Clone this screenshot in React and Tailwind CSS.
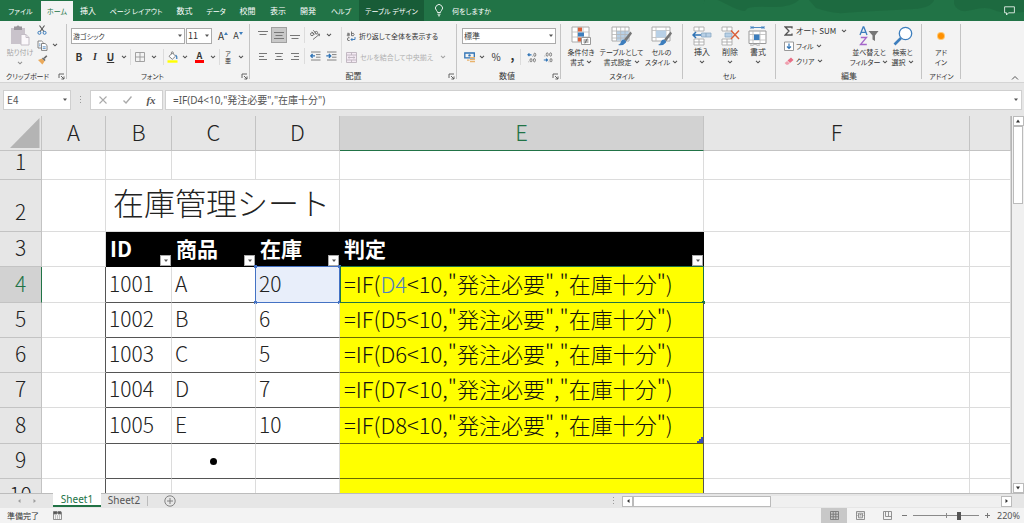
import React from "react";

const Chevron = ({ className = "" }) => (
  <svg viewBox="0 0 6 4" className={"h-1 w-[6px] shrink-0 " + className} fill="none" stroke="#555" strokeWidth="1.1">
    <path d="M1 .8 3 2.8 5 .8" />
  </svg>
);

const Caret = ({ className = "" }) => (
  <svg viewBox="0 0 6 4" className={"h-1 w-[6px] shrink-0 " + className} fill="#555">
    <path d="M1 .6h4L3 3z" />
  </svg>
);

const Launcher = () => (
  <svg viewBox="0 0 7 7" className="h-[7px] w-[7px]" fill="none" stroke="#555" strokeWidth=".9">
    <path d="M1 5V1h5M3 3l3 3M6 3.4V6H3.4" />
  </svg>
);

const Sep = () => <span className="h-4 w-px shrink-0 bg-[#dcdcdc]" />;

function Slot({ label, className, children }) {
  return (
    <button type="button" aria-label={label} className={"flex h-4 shrink-0 items-center justify-center " + className}>
      {children}
    </button>
  );
}

function Group({ title, className, launcher, small, children }) {
  return (
    <section className={"relative flex shrink-0 flex-col " + className}>
      <div className="h-[50px]">{children}</div>
      <div className="flex h-3 items-center justify-center">
        <span className={small ? "text-[7px]" : ""}>{title}</span>
      </div>
      {launcher && (
        <button type="button" aria-label={title + "の設定"} className="absolute right-[2px] bottom-[2px]">
          <Launcher />
        </button>
      )}
      <span className="absolute top-[3px] right-0 bottom-[3px] w-px bg-[#c4c4c4]" />
    </section>
  );
}

function BigButton({ icon, lines, chevron, small, className = "" }) {
  return (
    <button type="button" className={"flex shrink-0 flex-col items-center pt-[4px] " + (small ? "text-[7px] " : "") + className}>
      <span className="flex h-[22px] items-center justify-center">{icon}</span>
      <span className="flex h-[10px] items-center whitespace-nowrap">{lines[0]}</span>
      <span className="flex h-[10px] items-center gap-[2px] whitespace-nowrap">
        {lines[1]}
        {chevron && <Chevron />}
      </span>
    </button>
  );
}

const Lines = ({ d }) => (
  <svg viewBox="0 0 12 12" className="h-3 w-3" fill="none" stroke="#777" strokeWidth="1">
    <path d={d} />
  </svg>
);

const GrowIcon = ({ down }) => (
  <svg viewBox="0 0 4 3" className="mb-[6px] h-[3px] w-1" fill="#3d7ebd">
    <path d={down ? "M0 0h4L2 3z" : "M2 0l2 3H0z"} />
  </svg>
);
const PasteIcon = () => (
  <svg viewBox="0 0 20 21" className="h-[21px] w-5" fill="none">
    <path d="M1 3h14v16H1z" fill="#c9c3cb" />
    <path d="M4 1.5h2.5a1.7 1.7 0 0 1 3 0H12V5H4z" fill="#9a969c" />
    <path d="M11 9.5h5l3 3V20h-8z" fill="#fbf8fb" stroke="#c3bdc5" />
    <path d="M16 9.5v3h3" stroke="#c3bdc5" />
  </svg>
);
const CutIcon = () => (
  <svg viewBox="0 0 10 10" className="h-[10px] w-[10px]" fill="none">
    <path d="M2.5 .5 7 6.8M7.5 .5 3 6.8" stroke="#555" strokeWidth="1.1" />
    <circle cx="2.4" cy="7.8" r="1.5" stroke="#3d7ebd" />
    <circle cx="7.6" cy="7.8" r="1.5" stroke="#3d7ebd" />
  </svg>
);
const CopyIcon = () => (
  <svg viewBox="0 0 11 11" className="h-[11px] w-[11px]" fill="#fff" stroke="#777" strokeWidth=".9">
    <path d="M1 1h3.6l1.9 1.9V8H1z" />
    <path d="M4.5 3.5h3.6L10 5.4v5H4.5z" />
    <path d="M5.7 6.8h3M5.7 8.4h3M2 4h1.5M2 5.8h1.5" stroke="#3d7ebd" strokeWidth=".8" />
  </svg>
);
const BrushIcon = () => (
  <svg viewBox="0 0 11 10" className="h-[10px] w-[11px]">
    <path d="M1 5 5 3.6 7.6 6.2 5.4 9.5z" fill="#eaa95a" />
    <path d="m5 3.4 1-1 2.6 2.6-1 1z" fill="#666" />
    <path d="m7.2 3.4 2.6-2.6" stroke="#666" strokeWidth="1.6" />
  </svg>
);
const BorderIcon = () => (
  <svg viewBox="0 0 10 10" className="h-[10px] w-[10px]" fill="none" stroke="#999" strokeWidth=".9">
    <path d="M.5 .5h9v9h-9zM5 .5v9M.5 5h9" />
  </svg>
);
const FillIcon = () => (
  <svg viewBox="0 0 11 12" className="h-3 w-[11px]" fill="none">
    <path d="M.5 9.3h10v2.4H.5z" fill="#ff0" />
    <path d="m2 5.3 3.4-3.4 3.2 3.2-3.3 3.2z" fill="#fff" stroke="#777" strokeWidth=".9" />
    <path d="M4.4 3.4V1.2q1-1 1.8 0v2" stroke="#777" strokeWidth=".8" />
    <path d="M8.6 4q1.6 1 1.2 4" stroke="#3d7ebd" strokeWidth="1.3" />
  </svg>
);
const AngleIcon = () => (
  <svg viewBox="0 0 12 12" className="h-3 w-3" fill="none" stroke="#666" strokeWidth=".9">
    <circle cx="3" cy="5.2" r="1.5" />
    <path d="m3 2.8 2.4 2.8" />
    <path d="m4.2 1.2 3 3.4" />
    <circle cx="7.3" cy="3.7" r="1.3" />
    <path d="m4 10.5 6.4-5.2M8.6 5.2l2 0-.4 2" />
  </svg>
);
const IndentIcon = ({ flip }) => (
  <svg viewBox="0 0 11 10" className="h-[10px] w-[11px]" fill="none">
    <path d="M1 1h9.500M6 3.600h4.500M6 6.200h4.500M1 9h9.500" stroke="#777" strokeWidth=".9" />
    <path d={flip ? "M.3 4.900h4M2.900 3l1.800 1.900-1.800 1.900" : "M5 4.900H1M2.600 3 .8 4.900l1.800 1.900"} stroke="#2f73b5" strokeWidth="1.400" />
  </svg>
);
const WrapIcon = () => (
  <svg viewBox="0 0 10 11" className="h-[11px] w-[10px]" fill="none" stroke="#666" strokeWidth=".9">
    <path d="M1.200 2.300h2v2.500H1.500q-.9-.8 0-1.400h1.700M5.500 .5v4.300M5.500 2.500q2.600-.8 2.600 1t-2.600 1.200M3.600 6.800q-2-.8-2.200 1.200t2.200 1.500" />
    <path d="M9 6v2.500H5M6.400 7 5 8.500 6.400 10" stroke="#2f73b5" />
  </svg>
);
const MergeIcon = () => (
  <svg viewBox="0 0 11 11" className="h-[11px] w-[11px]" fill="#f4eaf4" stroke="#bdb3bd" strokeWidth=".9">
    <path d="M.5 .5h10v10H.5zM.5 3h10M.5 8h10M5.500 .5V3M5.500 8v2.500M2 5.500h7M3.500 4.300 2.200 5.500l1.300 1.200M7.500 4.300l1.300 1.200-1.300 1.200" />
  </svg>
);
const MoneyIcon = () => (
  <svg viewBox="0 0 12 11" className="h-[11px] w-3" fill="none">
    <path d="M.8 1h9.500v4.800H.8z" stroke="#2f73b5" strokeWidth="1.300" />
    <circle cx="5.500" cy="3.400" r="1.200" fill="#2f73b5" />
    <path d="M6 5h5v1.300H6zM6 7h5v1.300H6zM6 9h5v1.300H6zM3 7.500h2.500v1.200H3z" fill="#e9b36c" />
  </svg>
);
const DecimalIcon = ({ more }) => (
  <svg viewBox="0 0 10 11" className="h-[11px] w-[10px]" fill="none" stroke="#666" strokeWidth=".8">
    {more ? (
      <>
        <path d="M4.500 2.800H1M2.400 1.400 1 2.800l1.400 1.400" stroke="#2f73b5" strokeWidth="1.200" />
        <ellipse cx="7.800" cy="2.800" rx="1" ry="1.700" />
        <ellipse cx="4" cy="8.200" rx="1" ry="1.700" />
        <ellipse cx="7.400" cy="8.200" rx="1" ry="1.700" />
        <path d="M5.500 4.300h.6M1.500 9.800h.6" />
      </>
    ) : (
      <>
        <ellipse cx="4.200" cy="2.500" rx="1" ry="1.700" />
        <ellipse cx="7.600" cy="2.500" rx="1" ry="1.700" />
        <path d="M.8 8H4.500M3.100 6.600 4.500 8 3.100 9.400" stroke="#2f73b5" strokeWidth="1.200" />
        <ellipse cx="8" cy="8.200" rx="1" ry="1.700" />
        <path d="M5.700 9.800h.6M1.600 4h.6" />
      </>
    )}
  </svg>
);
const CondIcon = () => (
  <svg viewBox="0 0 21 20" className="h-5 w-[21px]" fill="none">
    <path d="M1 1h17v15H1z" fill="#fff" stroke="#aaa" />
    <path d="M6.500 1v15M12 1v15M1 6h17M1 11h17" stroke="#bbb" strokeWidth=".8" />
    <path d="M7 1.500h4v4H7zM7 11.500h3v4H7z" fill="#d9603b" />
    <path d="M7 6.500h6v4H7z" fill="#3d7ebd" />
    <path d="M10.500 11.500h9v7h-9z" fill="#fff" stroke="#999" />
    <path d="M12.500 14h5M12.500 16h5M16.300 12.500l-2.500 5" stroke="#555" strokeWidth=".8" />
  </svg>
);
const StyleBrush = () => (
  <>
    <path d="m19.500 5.500-6.500 8 2.300 1.800L21 7.500z" fill="#777" />
    <path d="M12.500 13.500q3 .5 2.500 3-2.500 3.500-8 2.500 3-1.500 3-3.500 1-2 2.500-2z" fill="#3d7ebd" />
  </>
);
const TableStyleIcon = () => (
  <svg viewBox="0 0 22 20" className="h-5 w-[22px]" fill="none">
    <path d="M1 1h17v14H1z" fill="#fff" stroke="#aaa" />
    <path d="M5.500 5h12v9.500h-12z" fill="#b8d0e6" />
    <path d="M5.500 1v14M9.700 1v14M14 1v14M1 5h17M1 8.500h17M1 12h17" stroke="#b5b5b5" strokeWidth=".8" />
    <StyleBrush />
  </svg>
);
const CellStyleIcon = () => (
  <svg viewBox="0 0 22 20" className="h-5 w-[22px]" fill="none">
    <path d="M1 1h18v14H1z" fill="#fff" stroke="#aaa" />
    <path d="M5 1v14M15 1v14M1 4.500h18M1 11.500h18" stroke="#bbb" strokeWidth=".8" />
    <path d="M5 4.500h10v7H5z" fill="#b8d0e6" />
    <StyleBrush />
  </svg>
);
const CellRows = () => (
  <path d="M2 1h10v4H2zM7 1v4M2 13h10v6H2zM7 13v6M2 16h10" fill="#fff" stroke="#aaa" strokeWidth=".9" />
);
const InsertIcon = () => (
  <svg viewBox="0 0 20 20" className="h-5 w-5" fill="none">
    <CellRows />
    <path d="M9.500 7h9.500v4H9.500z" fill="#b8d0e6" stroke="#8aa9c4" strokeWidth=".8" />
    <path d="M14 7v4" stroke="#8aa9c4" />
    <path d="M9 9H1M4 6 1 9l3 3" stroke="#2f73b5" strokeWidth="1.500" />
  </svg>
);
const DeleteIcon = () => (
  <svg viewBox="0 0 20 20" className="h-5 w-5" fill="none">
    <CellRows />
    <path d="M5 7h7v4H5z" fill="#b8d0e6" stroke="#8aa9c4" strokeWidth=".8" />
    <path d="m11 4.500 8 8.500M19 4.500 11 13" stroke="#d9603b" strokeWidth="1.500" />
  </svg>
);
const FormatIcon = () => (
  <svg viewBox="0 0 20 20" className="h-5 w-5" fill="none">
    <path d="M3 1.500h13M3 0v3M16 0v3M5.500 0 4 1.500 5.500 3M13.500 0 15 1.500 13.500 3" stroke="#3d7ebd" strokeWidth=".9" />
    <path d="M1 5h17v12.500H1z" fill="#fff" stroke="#999" />
    <path d="M5 5v12.500M12 5v12.500M1 8.500h17M1 14h17" stroke="#bbb" strokeWidth=".8" />
    <path d="M6 8.500h5.500V14H6z" fill="#3d7ebd" />
    <path d="M2 19q3 1 5-1 2 2 5 1" stroke="#999" strokeWidth=".8" />
  </svg>
);
const SortIcon = () => (
  <svg viewBox="0 0 20 20" className="h-5 w-5" fill="none">
    <path d="m1 9 3.200-8h.6L8 9M2.200 6.300h4.600" stroke="#3d7ebd" strokeWidth="1.300" />
    <path d="M1.800 11.500h5.700L1.500 18.500h6.300" stroke="#a566c9" strokeWidth="1.300" />
    <path d="M9.500 5h10L16 9.500V15l-2.500-1.500v-4z" fill="#777" />
  </svg>
);
const FindIcon = () => (
  <svg viewBox="0 0 20 20" className="h-5 w-5" fill="#fff">
    <path d="M8 12 1.500 18.500" stroke="#3d7ebd" strokeWidth="2.600" />
    <circle cx="12.500" cy="7.500" r="6.200" stroke="#3d7ebd" strokeWidth="1.300" />
  </svg>
);
const AddinIcon = () => (
  <svg viewBox="0 0 10 10" className="h-[10px] w-[10px]">
    <circle cx="5" cy="5" r="4" fill="#ffc56b" />
    <circle cx="5" cy="5" r="3" fill="#ff9000" />
  </svg>
);
const SumIcon = () => (
  <svg viewBox="0 0 9 10" className="h-[10px] w-[9px]" fill="none" stroke="#555" strokeWidth="1.300">
    <path d="M8 2.500V1H1.200L5 5 1.200 9H8V7.500" />
  </svg>
);
const FillDownIcon = () => (
  <svg viewBox="0 0 10 10" className="h-[10px] w-[10px]" fill="none">
    <path d="M.5 1h9v8.500h-9z" fill="#fff" stroke="#999" />
    <path d="M5 2.500v5M3 5.500l2 2 2-2" stroke="#2f73b5" strokeWidth="1.200" />
  </svg>
);
const EraserIcon = () => (
  <svg viewBox="0 0 10 8" className="h-2 w-[10px]">
    <path d="M3.500 3.500 7 .5 9.500 3 6 6z" fill="#e86f86" />
    <path d="M3.100 3.900 5.600 6.400 4 7.700H2.300L.6 6z" fill="#f0a0af" />
  </svg>
);

function Tab({ className, children }) {
  return (
    <button type="button" className={"flex shrink-0 items-center justify-center whitespace-nowrap " + className}>
      {children}
    </button>
  );
}

function TitleBar() {
  return (
    <nav className="relative flex h-[21px] shrink-0 items-stretch overflow-hidden bg-[#217346] text-white">
      <svg viewBox="0 0 330 21" className="absolute top-0 right-0 h-[21px] w-[330px]" fill="#1c663d">
        <path d="M10 0h95q-8 8-30 7T52 10 30 3 10 4zM115 0h125q-3 8-20 9t-38 2-32 2-28-5z" opacity=".7" />
        <path d="M260 0h70v12q-22 2-30-2t-22 0-18-6z" opacity=".7" />
      </svg>
      <Tab className="w-[41px] text-[7px]">ファイル</Tab>
      <Tab className="mt-px w-8 bg-[#f3f3f3] text-[7px] text-[#217346]">ホーム</Tab>
      <Tab className="w-[30px]">挿入</Tab>
      <Tab className="w-[66px] text-[7px]">ページ レイアウト</Tab>
      <Tab className="w-[31px]">数式</Tab>
      <Tab className="w-8 text-[7px]">データ</Tab>
      <Tab className="w-[31px]">校閲</Tab>
      <Tab className="w-[30px]">表示</Tab>
      <Tab className="w-[30px]">開発</Tab>
      <Tab className="w-9 text-[7px]">ヘルプ</Tab>
      <Tab className="w-[65px] bg-[#185c37] text-[7px]">テーブル デザイン</Tab>
      <Tab className="ml-[10px] gap-2 text-[7px]">
        <svg viewBox="0 0 10 13" className="h-[13px] w-[10px]" fill="none" stroke="#fff" strokeWidth=".9">
          <path d="M3.500 8.500q0-1-1-2a3.500 3.500 0 1 1 5 0q-1 1-1 2zM3.500 10.200h3M4 11.800h2" />
        </svg>
        何をしますか
      </Tab>
      <button type="button" aria-label="コメント" className="relative mr-[9px] ml-auto flex items-center">
        <svg viewBox="0 0 11 10" className="h-[10px] w-[11px]" fill="none" stroke="#e5efe9" strokeWidth=".9">
          <path d="M.6 .8h9.800v6H4.500L2.500 9V6.800H.6z" />
        </svg>
      </button>
    </nav>
  );
}

function Ribbon() {
  return (
    <div className="flex h-[62px] shrink-0 overflow-hidden border-b border-[#d4d4d4] bg-[#f3f3f3]">
      <Group title="クリップボード" className="w-[67px] pr-3" launcher small>
        <div className="flex pl-1">
          <div className="text-[#a5a5a5]">
            <button type="button" className="flex w-8 flex-col items-center pt-[4px]">
              <PasteIcon />
              <span className="flex h-[11px] items-center text-[7px] whitespace-nowrap">貼り付け</span>
              <Chevron className="mt-1 opacity-60" />
            </button>
          </div>
          <div className="flex flex-col gap-[5px] pt-1 pl-[1px]">
            <button type="button" aria-label="切り取り" className="h-[10px]"><CutIcon /></button>
            <button type="button" aria-label="コピー" className="flex h-[10px] items-center gap-1"><CopyIcon /><Chevron /></button>
            <button type="button" aria-label="書式のコピー" className="h-[10px]"><BrushIcon /></button>
          </div>
        </div>
      </Group>

      <Group title="フォント" className="w-[183px] pr-3" launcher small>
        <div className="flex items-center pt-[7px] pl-1">
          <label className="relative flex h-4 w-[114px] shrink-0 items-center border border-[#ababab] bg-white">
            <select aria-label="フォント名" className="h-full w-full appearance-none px-px text-[7px]">
              <option>游ゴシック</option>
            </select>
            <Caret className="pointer-events-none absolute right-px" />
          </label>
          <label className="relative ml-px flex h-4 w-[26px] shrink-0 items-center border border-[#ababab] bg-white">
            <select aria-label="フォント サイズ" className="h-full w-full appearance-none px-px text-[9px]">
              <option>11</option>
            </select>
            <Caret className="pointer-events-none absolute right-px" />
          </label>
          <Slot label="拡大" className="w-[18px] pl-1 text-[10px]">A<GrowIcon /></Slot>
          <Slot label="縮小" className="w-4 text-[9px]">A<GrowIcon down /></Slot>
        </div>
        <div className="flex items-center pt-[5px] pl-1">
          <Slot label="太字" className="w-4 text-[10px] font-bold">B</Slot>
          <Slot label="斜体" className="w-4 font-['Liberation_Serif',serif] text-[10px] font-bold italic">I</Slot>
          <Slot label="下線" className="w-[15px] text-[10px] font-bold underline">U</Slot>
          <Slot label="下線の種類" className="w-3"><Chevron /></Slot>
          <Sep />
          <Slot label="罫線" className="w-[18px]"><BorderIcon /></Slot>
          <Slot label="罫線の種類" className="w-[10px]"><Chevron /></Slot>
          <span className="w-1 shrink-0" />
          <Sep />
          <Slot label="塗りつぶし" className="w-[16px]"><FillIcon /></Slot>
          <Slot label="塗りつぶしの色" className="w-[10px]"><Chevron /></Slot>
          <Slot label="文字色" className="w-[19px]">
            <span className="border-b-[3px] border-[#f00] px-[2px] text-[9px] leading-[9px] font-bold">A</span>
          </Slot>
          <Slot label="文字色の選択" className="w-[8px]"><Chevron /></Slot>
          <span className="w-[2px] shrink-0" />
          <Sep />
          <Slot label="ふりがな" className="w-[16px] flex-col text-[6px] leading-[7px]"><span>ア</span><span>亜</span></Slot>
          <Slot label="ふりがなの設定" className="w-[10px]"><Chevron /></Slot>
        </div>
      </Group>

      <Group title="配置" className="w-[207px]" launcher>
        <div className="flex">
          <div className="w-[91px]">
            <div className="flex items-center pt-[6px] pl-[5px]">
              <Slot label="上揃え" className="w-4"><Lines d="M1 2.500h10M2.500 5.500h7" /></Slot>
              <Slot label="上下中央揃え" className="w-4 border border-[#a0a0a0] bg-[#c8c8c8]"><Lines d="M1 3.500h10M2.500 6.500h7M1 9.500h10" /></Slot>
              <Slot label="下揃え" className="w-4"><Lines d="M1 6.500h10M2.500 9.500h7" /></Slot>
              <span className="w-px" />
              <Sep />
              <Slot label="方向" className="w-5"><AngleIcon /></Slot>
              <Slot label="方向の設定" className="w-2"><Chevron /></Slot>
            </div>
            <div className="flex items-center pt-[5px] pl-[5px]">
              <Slot label="左揃え" className="w-4"><Lines d="M2 3.500h8M2 6.500h5M2 9.500h8" /></Slot>
              <Slot label="中央揃え" className="w-4"><Lines d="M2 3.500h8M3.500 6.500h5M2 9.500h8" /></Slot>
              <Slot label="右揃え" className="w-4"><Lines d="M2 3.500h8M5 6.500h5M2 9.500h8" /></Slot>
              <span className="w-px" />
              <Sep />
              <Slot label="インデントを減らす" className="w-5"><IndentIcon /></Slot>
              <Slot label="インデントを増やす" className="w-3"><IndentIcon flip /></Slot>
            </div>
          </div>
          <div className="mt-[6px] h-9 w-px bg-[#dcdcdc]" />
          <div className="text-[7px]">
            <button type="button" className="mt-[7px] flex h-4 items-center gap-[3px] pl-1 whitespace-nowrap"><WrapIcon />折り返して全体を表示する</button>
            <button type="button" className="mt-[5px] flex h-4 items-center gap-[3px] pl-1 whitespace-nowrap text-[#b0b0b0]"><MergeIcon />セルを結合して中央揃え<Chevron className="ml-1 opacity-50" /></button>
          </div>
        </div>
      </Group>

      <Group title="数値" className="w-[104px] pr-1" launcher>
        <div className="pt-[7px] pl-[5px]">
          <label className="relative flex h-4 w-[94px] items-center border border-[#ababab] bg-white">
            <select aria-label="表示形式" className="h-full w-full appearance-none px-px">
              <option>標準</option>
            </select>
            <Caret className="pointer-events-none absolute right-px" />
          </label>
        </div>
        <div className="flex items-center pt-[5px] pl-[5px]">
          <Slot label="通貨" className="w-[15px]"><MoneyIcon /></Slot>
          <Slot label="通貨の種類" className="w-[10px]"><Chevron /></Slot>
          <Slot label="パーセント" className="w-[18px] text-[10px]">%</Slot>
          <Slot label="桁区切り" className="w-[15px] pb-1 text-[12px] font-bold">,</Slot>
          <Sep />
          <Slot label="小数点以下の桁数を増やす" className="ml-[3px] w-4"><DecimalIcon more /></Slot>
          <Slot label="小数点以下の桁数を減らす" className="w-4"><DecimalIcon /></Slot>
        </div>
      </Group>

      <Group title="スタイル" className="w-[122px]" small>
        <div className="flex">
          <BigButton className="w-[40px]" icon={<CondIcon />} lines={["条件付き", "書式"]} chevron small />
          <BigButton className="w-[41px]" icon={<TableStyleIcon />} lines={["テーブルとして", "書式設定"]} chevron small />
          <BigButton className="w-[39px]" icon={<CellStyleIcon />} lines={["セルの", "スタイル"]} chevron small />
        </div>
      </Group>

      <Group title="セル" className="w-[93px]" small>
        <div className="flex pl-[5px]">
          <BigButton className="w-[28px]" icon={<InsertIcon />} lines={["挿入", ""]} chevron />
          <BigButton className="w-[28px]" icon={<DeleteIcon />} lines={["削除", ""]} chevron />
          <BigButton className="w-[28px]" icon={<FormatIcon />} lines={["書式", ""]} chevron />
        </div>
      </Group>

      <Group title="編集" className="w-[146px]">
        <div className="flex pl-2">
          <div className="flex w-[66px] flex-col gap-[5px] pt-[5px]">
            <button type="button" className="flex h-[10px] items-center gap-[3px] whitespace-nowrap"><SumIcon />オート SUM<Chevron className="ml-[2px]" /></button>
            <button type="button" className="flex h-[10px] items-center gap-[2px] text-[7px] whitespace-nowrap"><FillDownIcon />フィル<Chevron /></button>
            <button type="button" className="flex h-[10px] items-center gap-[2px] text-[7px] whitespace-nowrap"><EraserIcon />クリア<Chevron /></button>
          </div>
          <BigButton className="w-[38px]" icon={<SortIcon />} lines={["並べ替えと", "フィルター"]} chevron small />
          <BigButton className="w-[29px]" icon={<FindIcon />} lines={["検索と", "選択"]} chevron small />
        </div>
      </Group>

      <Group title="アドイン" className="w-[39px]" small>
        <BigButton className="w-[38px]" icon={<AddinIcon />} lines={["アド", "イン"]} small />
      </Group>
      <button type="button" aria-label="リボンを折りたたむ" className="mt-auto mr-[5px] mb-[2px] ml-auto">
        <svg viewBox="0 0 8 5" className="h-[5px] w-2" fill="none" stroke="#555">
          <path d="M1 4.500 4 1.500 7 4.500" />
        </svg>
      </button>
    </div>
  );
}

function FormulaBar() {
  return (
    <div className="flex h-[33px] shrink-0 items-center bg-[#e6e6e6] pl-[3px] text-[10px] text-[#555]">
      <label className="relative flex h-5 w-[68px] items-center border border-[#cfcfcf] bg-white">
        <input aria-label="名前ボックス" defaultValue="E4" className="w-full bg-transparent px-[3px] outline-none" />
        <Caret className="pointer-events-none absolute right-[2px]" />
      </label>
      <svg viewBox="0 0 3 8" className="mx-2 h-2 w-[3px]" fill="#999">
        <path d="M1 0h1v1H1zM1 3h1v1H1zM1 6h1v1H1z" />
      </svg>
      <div className="flex h-5 w-[73px] items-center border border-[#cfcfcf] bg-white">
        <Slot label="キャンセル" className="w-6">
          <svg viewBox="0 0 8 8" className="h-2 w-2" stroke="#aaa" strokeWidth="1.100"><path d="m.5 .5 7 7M7.500 .5l-7 7" /></svg>
        </Slot>
        <Slot label="入力" className="w-6">
          <svg viewBox="0 0 9 8" className="h-2 w-[9px]" fill="none" stroke="#aaa" strokeWidth="1.400"><path d="M.5 4.500 3 7l5.500-6.500" /></svg>
        </Slot>
        <Slot label="関数の挿入" className="w-6 font-['Liberation_Serif',serif] text-[11px] font-bold italic">fx</Slot>
      </div>
      <label className="relative mr-[2px] ml-[2px] flex h-5 flex-1 items-center border border-[#cfcfcf] bg-white">
        <input
          aria-label="数式バー"
          defaultValue={'=IF(D4<10,"発注必要","在庫十分")'}
          className="w-full bg-transparent px-[7px] font-['Noto_Sans','Noto_Sans_CJK_JP',sans-serif] outline-none"
        />
        <Caret className="pointer-events-none absolute right-[2px]" />
      </label>
    </div>
  );
}

const products = [
  { n: 4, id: "1001", name: "A", stock: "20", h: "h-9" },
  { n: 5, id: "1002", name: "B", stock: "6", h: "h-[35px]" },
  { n: 6, id: "1003", name: "C", stock: "5", h: "h-[35px]" },
  { n: 7, id: "1004", name: "D", stock: "7", h: "h-[35px]" },
  { n: 8, id: "1005", name: "E", stock: "10", h: "h-9" },
];

const line = "border-r border-b border-[#dcdcdc] ";
const corner = "border-r border-b border-[#c3c3c3] bg-[#e6e6e6] p-0 text-center font-light text-[#222] ";
const head = corner + "pb-1 ";
const activeHead = "border-r border-b bg-[#d2d2d2] p-0 pb-1 text-center font-light text-[#217346] ";
const body = "relative border-r border-b border-r-[#dcdcdc] border-b-[#555] p-0 pb-1 whitespace-nowrap ";
const yellow = "relative border-r border-b border-r-[#555] border-b-[#6b6b00] bg-[#ff0] p-0 pb-1 pl-1 text-[22px] whitespace-nowrap text-[#111] ";

function FilterHead({ children }) {
  return (
    <th className="relative border-b border-black bg-black p-0 pb-[3px] pl-[4px] text-left font-bold text-white">
      {children}
      <button type="button" aria-label={children + "のフィルター"} className="absolute right-px bottom-0 flex h-[11px] w-[11px] items-center justify-center border border-[#aaa] bg-white">
        <Caret />
      </button>
    </th>
  );
}

function Handles() {
  return (
    <>
      <span className="absolute -top-[2px] -left-[2px] h-[3px] w-[3px] bg-[#4472c4]" />
      <span className="absolute -top-[2px] -right-[2px] h-[3px] w-[3px] bg-[#4472c4]" />
      <span className="absolute -bottom-[2px] -left-[2px] h-[3px] w-[3px] bg-[#4472c4]" />
      <span className="absolute -right-[2px] -bottom-[2px] h-[3px] w-[3px] bg-[#4472c4]" />
    </>
  );
}

function Sheet() {
  return (
    <table className="w-full table-fixed border-separate border-spacing-0 font-['Noto_Sans_CJK_JP',sans-serif] text-[21px] leading-[28px] font-light text-[#222]">
      <colgroup>
        <col className="w-[42px]" />
        <col className="w-[64px]" />
        <col className="w-[66px]" />
        <col className="w-[84px]" />
        <col className="w-[84px]" />
        <col className="w-[364px]" />
        <col className="w-[266px]" />
        <col />
      </colgroup>
      <thead className="text-[22px]">
        <tr className="h-[35px]">
          <th className={corner} aria-label="すべて選択">
            <svg viewBox="0 0 41 34" className="ml-auto h-[34px] w-[41px]" fill="#b4b4b4"><path d="M39.500 2v30H10z" /></svg>
          </th>
          {["A", "B", "C", "D"].map((c) => <th key={c} scope="col" className={head}>{c}</th>)}
          <th scope="col" className={activeHead + "border-r-[#c3c3c3] border-b-[#217346]"}>E</th>
          <th scope="col" className={head}>F</th>
          <th scope="col" aria-label="G" className={head} />
        </tr>
      </thead>
      <tbody>
        <tr className="h-[29px]">
          <th scope="row" className={corner + "align-top leading-[20px]"}>1</th>
          {["A", "B", "C", "D", "E", "F", "G"].map((c) => <td key={c} className={line} />)}
        </tr>
        <tr className="h-[52px]">
          <th scope="row" className={corner + "pt-[10px]"}>2</th>
          <td className={line} />
          <td colSpan={3} className={line + "p-0 pb-2 pl-[7px] text-[31px] leading-[40px] whitespace-nowrap"}>在庫管理シート</td>
          <td className={line} /><td className={line} /><td className={line} />
        </tr>
        <tr className="h-[35px]">
          <th scope="row" className={head}>3</th>
          <td className={line} />
          <FilterHead>ID</FilterHead>
          <FilterHead>商品</FilterHead>
          <FilterHead>在庫</FilterHead>
          <FilterHead>判定</FilterHead>
          <td className={line} /><td className={line} />
        </tr>
        {products.map((p) => {
          const active = p.n === 4;
          return (
            <tr key={p.id} className={p.h}>
              <th scope="row" className={active ? activeHead + "border-r-[#217346] border-b-[#c3c3c3]" : head}>{p.n}</th>
              <td className="border-r border-b border-r-[#555] border-b-[#dcdcdc]" />
              <td className={body + "pl-[3px]"}>{p.id}</td>
              <td className={body + "pl-[3px]"}>{p.name}</td>
              <td className={active ? body + "bg-[#e8eefa] pl-[3px]" : body + "pl-[3px]"}>
                {p.stock}
                {active && <span className="absolute -top-px -right-px -bottom-px -left-px border border-[#4472c4]"><Handles /></span>}
              </td>
              <td className={yellow}>
                =IF({active ? <span className="text-[#4f81bd]">D4</span> : "D" + p.n}{'<10,"発注必要","在庫十分")'}
                {active && (
                  <span className="absolute -top-px -right-px -bottom-px left-0 border border-[#217346]">
                    <span className="absolute -right-[2px] -bottom-[2px] h-[3px] w-[3px] bg-[#217346]" />
                  </span>
                )}
                {p.n === 8 && (
                  <svg viewBox="0 0 6 6" className="absolute right-0 bottom-0 h-[6px] w-[6px]" fill="#3f51b5"><path d="M4 0h2v6H0V4h2V2h2z" /></svg>
                )}
              </td>
              <td className={line} /><td className={line} />
            </tr>
          );
        })}
        {[9, 10].map((n) => (
          <tr key={n} className="h-[35px]">
            <th scope="row" className={head}>{n}</th>
            <td className="border-r border-b border-r-[#555] border-b-[#dcdcdc]" />
            <td className={body} />
            <td className={body}>
              {n === 9 && <span className="mx-auto mt-1 block h-[7px] w-[7px] rounded-full bg-black" />}
            </td>
            <td className={body} />
            <td className={yellow} />
            <td className={line} /><td className={line} />
          </tr>
        ))}
      </tbody>
    </table>
  );
}

const Arrow = ({ d }) => (
  <svg viewBox="0 0 6 6" className="h-[6px] w-[6px]" fill="#333"><path d={d} /></svg>
);

function VerticalScroll() {
  return (
    <div className="flex w-[13px] shrink-0 flex-col items-center border-l border-[#b5b5b5] bg-[#f0f0f0]">
      <button type="button" aria-label="上へ" className="flex h-[10px] w-[11px] items-center justify-center border border-[#bbb] bg-white"><Arrow d="M3 1.500 5 4.500H1z" /></button>
      <span className="h-[78px] w-[10px] border border-[#bbb] bg-white" />
      <button type="button" aria-label="下へ" className="mt-auto flex h-[10px] w-[11px] items-center justify-center border border-[#bbb] bg-white"><Arrow d="M1 1.500h4L3 4.500z" /></button>
    </div>
  );
}

function SheetTabs() {
  return (
    <div className="flex h-[15px] shrink-0 items-stretch border-t border-[#bcbcbc] bg-[#e6e6e6] font-['Noto_Sans',sans-serif] text-[10px] leading-[12px] text-[#555]">
      <div className="flex w-[53px] items-center justify-center gap-[10px] opacity-40">
        <button type="button" aria-label="前のシート"><Arrow d="M4.500 1v4L2 3z" /></button>
        <button type="button" aria-label="次のシート"><Arrow d="M1.500 1v4L4 3z" /></button>
      </div>
      <button type="button" className="-mt-px mb-px w-12 border-b-2 border-[#217346] bg-white text-[#217346]">Sheet1</button>
      <button type="button" className="w-[46px] pb-[2px]">Sheet2</button>
      <span className="my-[2px] w-px bg-[#bbb]" />
      <button type="button" aria-label="新しいシート" className="ml-4 flex items-center">
        <svg viewBox="0 0 12 12" className="h-3 w-3" fill="none" stroke="#777" strokeWidth=".9"><circle cx="6" cy="6" r="5.200" /><path d="M6 3v6M3 6h6" /></svg>
      </button>
      <div className="ml-auto flex w-[412px] items-center">
        <svg viewBox="0 0 3 8" className="mr-[7px] h-2 w-[3px]" fill="#999"><path d="M1 0h1v1H1zM1 3h1v1H1zM1 6h1v1H1z" /></svg>
        <div className="flex h-[11px] flex-1 items-stretch bg-[#f0f0f0]">
          <button type="button" aria-label="左へ" className="flex w-[11px] items-center justify-center border border-[#bbb] bg-white"><Arrow d="M4.500 1v4L2 3z" /></button>
          <span className="w-[138px] border border-[#bbb] bg-white" />
          <button type="button" aria-label="右へ" className="ml-auto flex w-[11px] items-center justify-center border border-[#bbb] bg-white"><Arrow d="M1.500 1v4L4 3z" /></button>
        </div>
        <span className="w-3" />
      </div>
    </div>
  );
}

function StatusBar() {
  return (
    <footer className="flex h-[15px] shrink-0 items-center bg-[#f3f3f3] pl-[7px]">
      <span>準備完了</span>
      <svg viewBox="0 0 9 9" className="ml-[14px] h-[9px] w-[9px]" fill="none" stroke="#777" strokeWidth=".8">
        <path d="M.5 1.500h8v7h-8zM2 5h1M4 5h1M6 5h1M2 7h1M4 7h1M6 7h1" />
        <path d="M.5 .5h3.500v2.500H.5zM5 .5h3v2.500H5z" fill="#555" />
      </svg>
      <div className="ml-auto flex h-full items-center">
        <Slot label="標準" className="w-[26px] bg-[#c8c8c8]">
          <svg viewBox="0 0 9 9" className="h-[9px] w-[9px]" fill="none" stroke="#777" strokeWidth=".9"><path d="M.5 .5h8v8h-8zM3.200 .5v8M5.800 .5v8M.5 3.200h8M.5 5.800h8" /></svg>
        </Slot>
        <Slot label="ページ レイアウト表示" className="w-[27px]">
          <svg viewBox="0 0 9 9" className="h-[9px] w-[9px]" fill="none" stroke="#888" strokeWidth=".9"><path d="M.5 .5h8v8h-8zM2.500 2.200h4v4.600h-4zM3.500 3.500h2M3.500 5h2M.5 2h1M7.500 2h1M.5 4.500h1M7.500 4.500h1" /></svg>
        </Slot>
        <Slot label="改ページ プレビュー" className="w-[26px]">
          <svg viewBox="0 0 9 9" className="h-[9px] w-[9px]" fill="none" stroke="#888" strokeWidth=".9"><path d="M.5 .5h8v8h-8zM2.500 .5v5h6M5.500 .5v5" /></svg>
        </Slot>
        <span className="mx-[2px] h-px w-[5px] bg-[#777]" />
        <input
          type="range"
          aria-label="ズーム"
          min="0"
          max="100"
          defaultValue="71"
          className="mx-[4px] h-3 w-[66px] appearance-none bg-[linear-gradient(#8a8a8a,#8a8a8a),linear-gradient(#8a8a8a,#8a8a8a)] bg-[length:100%_1px,1px_5px] bg-center bg-no-repeat [&::-webkit-slider-thumb]:h-[8px] [&::-webkit-slider-thumb]:w-[4px] [&::-webkit-slider-thumb]:appearance-none [&::-webkit-slider-thumb]:bg-[#555]"
        />
        <svg viewBox="0 0 5 5" className="mx-[2px] h-[5px] w-[5px]" stroke="#777"><path d="M2.500 0v5M0 2.500h5" /></svg>
        <span className="w-8 pr-1 text-right font-['Noto_Sans',sans-serif] text-[9px] text-[#555]">220%</span>
      </div>
    </footer>
  );
}

export default function App() {
  return (
    <div lang="ja" className="flex h-screen w-full flex-col overflow-hidden bg-[#e6e6e6] font-['Noto_Sans_CJK_JP',sans-serif] text-[8px] leading-[10px] text-[#333] [font-feature-settings:'palt']">
      <TitleBar />
      <Ribbon />
      <FormulaBar />
      <main className="flex min-h-0 flex-1">
        <div className="min-w-0 flex-1 overflow-hidden bg-white [font-feature-settings:normal]">
          <Sheet />
        </div>
        <VerticalScroll />
      </main>
      <SheetTabs />
      <StatusBar />
    </div>
  );
}
